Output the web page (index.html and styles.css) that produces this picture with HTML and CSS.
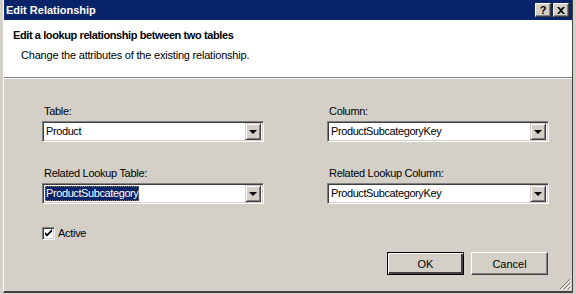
FILE: index.html
```html
<!DOCTYPE html>
<html>
<head>
  <meta charset="utf-8">
  <title>Edit Relationship</title>
  <link rel="stylesheet" href="styles.css">
</head>
<body>
  <div class="window">
    <div class="titlebar">
      <span class="title">Edit Relationship</span>
      <div class="caption-btns">
        <span class="cbtn">?</span>
        <span class="cbtn">
          <svg width="8" height="7" viewBox="0 0 8 7"><path d="M0 0h2l2 2 2-2h2L5 3.5 8 7H6L4 5 2 7H0l3-3.5z" fill="#000"/></svg>
        </span>
      </div>
    </div>

    <div class="header">
      <div class="heading">Edit a lookup relationship between two tables</div>
      <div class="subheading">Change the attributes of the existing relationship.</div>
    </div>

    <div class="content">
      <div class="fields">
        <div class="field">
          <label>Table:</label>
          <div class="combo"><span class="value">Product</span><span class="drop"></span></div>
        </div>
        <div class="field">
          <label>Column:</label>
          <div class="combo"><span class="value">ProductSubcategoryKey</span><span class="drop"></span></div>
        </div>
        <div class="field">
          <label>Related Lookup Table:</label>
          <div class="combo"><span class="value selected">ProductSubcategory</span><span class="drop"></span></div>
        </div>
        <div class="field">
          <label>Related Lookup Column:</label>
          <div class="combo"><span class="value">ProductSubcategoryKey</span><span class="drop"></span></div>
        </div>
      </div>

      <label class="check">
        <span class="box">
          <svg width="9" height="9" viewBox="0 0 9 9"><path d="M1 3l2 2 5-5v2.5l-5 5-2-2z" fill="#000"/></svg>
        </span>
        Active
      </label>

      <div class="actions">
        <button class="btn default">OK</button>
        <button class="btn">Cancel</button>
      </div>

      <span class="grip">
        <svg width="12" height="12" viewBox="0 0 12 12">
          <path d="M11 1L1 11M11 5L5 11M11 9L9 11" stroke="#808080" stroke-width="1"/>
          <path d="M12 2L2 12M12 6L6 12M12 10L10 12" stroke="#fff" stroke-width="1"/>
        </svg>
      </span>
    </div>
  </div>
</body>
</html>
```

FILE: styles.css
```css
* {
  box-sizing: border-box;
}

body {
  margin: 0;
  background: #d4d0c8;
  font-family: "Liberation Sans", Arial, sans-serif;
  font-size: 11px;
  letter-spacing: -0.3px;
  color: #000;
}

.window {
  margin-left: 3px;
  width: 570px;
  height: 293px;
  border-left: 1px solid #fff;
  border-right: 1px solid #404040;
  border-bottom: 2px solid #404040;
  display: flex;
  flex-direction: column;
  background: #d4d0c8;
}

.titlebar {
  height: 20px;
  background: #0a246a;
  color: #fff;
  display: flex;
  align-items: center;
  justify-content: space-between;
  padding: 0 3px 0 2px;
}

.title {
  font-weight: bold;
  font-size: 11px;
  letter-spacing: 0;
}

.caption-btns {
  display: flex;
  gap: 2px;
}

.cbtn {
  width: 16px;
  height: 14px;
  background: #d4d0c8;
  color: #000;
  font-weight: bold;
  font-size: 11px;
  line-height: 12px;
  text-align: center;
  border-top: 1px solid #fff;
  border-left: 1px solid #fff;
  border-right: 1px solid #404040;
  border-bottom: 1px solid #404040;
  box-shadow: inset -1px -1px 0 #808080;
  display: flex;
  align-items: center;
  justify-content: center;
}

.header {
  height: 58px;
  background: #fff;
  border-bottom: 1px solid #808080;
  box-shadow: 0 1px 0 #fff;
  padding: 8px 0 0 9px;
}

.heading {
  font-weight: bold;
  line-height: 14px;
  letter-spacing: -0.4px;
}

.subheading {
  margin-top: 7px;
  padding-left: 8px;
  line-height: 13px;
  letter-spacing: -0.2px;
}

.content {
  flex: 1;
  position: relative;
  padding: 27px 24px 0 38px;
}

.fields {
  display: grid;
  grid-template-columns: 222px 222px;
  column-gap: 63px;
  row-gap: 25px;
}

.field label {
  display: block;
  line-height: 13px;
  margin: 0 0 3px 2px;
}

.combo {
  height: 21px;
  background: #fff;
  border-top: 1px solid #808080;
  border-left: 1px solid #808080;
  border-right: 1px solid #fff;
  border-bottom: 1px solid #fff;
  box-shadow: inset 1px 1px 0 #404040, inset -1px -1px 0 #d4d0c8;
  display: flex;
  align-items: center;
  padding: 2px;
}

.value {
  flex: 1;
  align-self: stretch;
  line-height: 15px;
  padding-left: 1px;
  white-space: nowrap;
  letter-spacing: -0.4px;
}

.value.selected {
  flex: 0 0 auto;
  background: #0a246a;
  color: #fff;
  outline: 1px dotted #808080;
  outline-offset: -1px;
  padding-right: 1px;
}

.combo .selected + .drop {
  margin-left: auto;
}

.drop {
  width: 16px;
  height: 17px;
  background: #d4d0c8;
  border-top: 1px solid #d4d0c8;
  border-left: 1px solid #d4d0c8;
  border-right: 1px solid #404040;
  border-bottom: 1px solid #404040;
  box-shadow: inset 1px 1px 0 #fff, inset -1px -1px 0 #808080;
  position: relative;
}

.drop::after {
  content: "";
  position: absolute;
  left: 3px;
  top: 6px;
  border-left: 4px solid transparent;
  border-right: 4px solid transparent;
  border-top: 4px solid #000;
}

.check {
  display: flex;
  align-items: center;
  gap: 3px;
  margin-top: 23px;
  line-height: 13px;
}

.box {
  width: 13px;
  height: 13px;
  background: #fff;
  border-top: 1px solid #808080;
  border-left: 1px solid #808080;
  border-right: 1px solid #fff;
  border-bottom: 1px solid #fff;
  box-shadow: inset 1px 1px 0 #404040, inset -1px -1px 0 #d4d0c8;
  display: flex;
  align-items: center;
  justify-content: center;
}

.actions {
  display: flex;
  justify-content: flex-end;
  gap: 7px;
  margin-top: 12px;
}

.btn {
  width: 77px;
  height: 23px;
  font-family: inherit;
  font-size: 11px;
  letter-spacing: 0;
  color: #000;
  background: #d4d0c8;
  border-top: 1px solid #fff;
  border-left: 1px solid #fff;
  border-right: 1px solid #404040;
  border-bottom: 1px solid #404040;
  box-shadow: inset -1px -1px 0 #808080;
  padding: 0;
}

.btn.default {
  border: 1px solid #000;
  box-shadow: inset 1px 1px 0 #fff, inset -2px -2px 0 #404040, inset -1px -1px 0 #404040;
}

.grip {
  position: absolute;
  right: 1px;
  bottom: 1px;
  width: 12px;
  height: 12px;
}
```
